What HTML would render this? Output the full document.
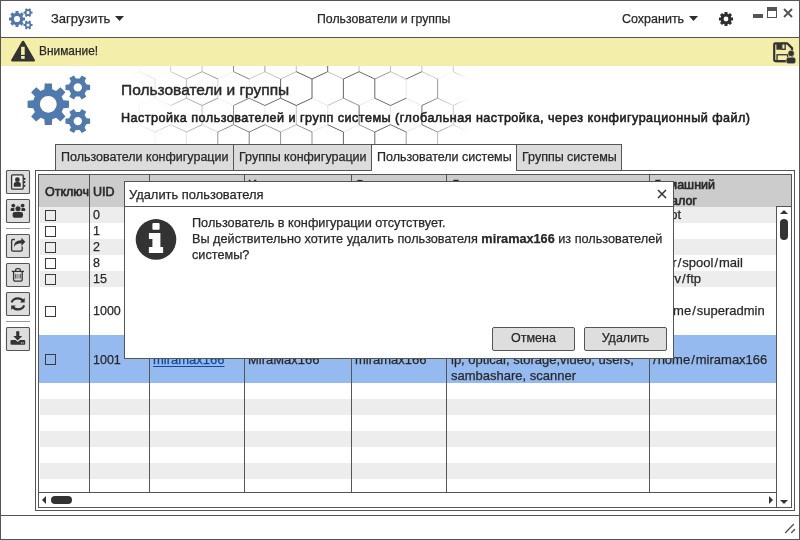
<!DOCTYPE html>
<html><head><meta charset="utf-8">
<style>
*{margin:0;padding:0;box-sizing:border-box}
html,body{width:800px;height:540px;overflow:hidden;background:#fff}
body{font-family:"Liberation Sans",sans-serif;color:#282828;font-size:12.5px}
#w{position:relative;width:800px;height:540px;overflow:hidden;background:#fff;will-change:transform;-webkit-text-stroke-width:0.25px}
.a{position:absolute}
.t{position:absolute;white-space:nowrap;line-height:16px}
.l{font-size:13px}
.s{font-style:normal;margin:0 1px}
.hd{-webkit-text-stroke-width:0.6px}
.hl{position:absolute;background:#555;height:1px}
.vl{position:absolute;background:#555;width:1px}
.btn{position:absolute;width:24px;height:24px;border:1px solid #555;border-radius:3px;background:#dedede}
.tab{position:absolute;top:144px;height:27px;border:1px solid #555;background:#dcdcdc;padding-left:5px;line-height:24px;white-space:nowrap}
.cb{position:absolute;width:11px;height:11px;border:1px solid #3a3a3a;left:45px}
</style></head><body><div id="w">
<div class="a" style="left:0;top:0;width:800px;height:540px;border:1px solid #555"></div>

<!-- top bar -->
<svg class="a" style="left:0;top:0" width="40" height="37" viewBox="0 0 40 37">
 <g fill="#4f77ae" fill-rule="evenodd">
  <path transform="translate(17,19)" d="M5.99,-1.59 L7.97,-1.45 L7.97,1.45 L5.99,1.59 L5.36,3.11 L6.66,4.61 L4.61,6.66 L3.11,5.36 L1.59,5.99 L1.45,7.97 L-1.45,7.97 L-1.59,5.99 L-3.11,5.36 L-4.61,6.66 L-6.66,4.61 L-5.36,3.11 L-5.99,1.59 L-7.97,1.45 L-7.97,-1.45 L-5.99,-1.59 L-5.36,-3.11 L-6.66,-4.61 L-4.61,-6.66 L-3.11,-5.36 L-1.59,-5.99 L-1.45,-7.97 L1.45,-7.97 L1.59,-5.99 L3.11,-5.36 L4.61,-6.66 L6.66,-4.61 L5.36,-3.11Z M3.10,0.00 A3.1,3.1 0 1 0 -3.10,0.00 A3.1,3.1 0 1 0 3.10,0.00Z"/>
  <path transform="translate(28,12.6) scale(0.37)" d="M8.76,-2.81 L12.32,-2.63 L12.32,2.63 L8.76,2.81 L6.81,6.18 L8.44,9.36 L3.89,11.99 L1.95,8.99 L-1.95,8.99 L-3.89,11.99 L-8.44,9.36 L-6.81,6.18 L-8.76,2.81 L-12.32,2.63 L-12.32,-2.63 L-8.76,-2.81 L-6.81,-6.18 L-8.44,-9.36 L-3.89,-11.99 L-1.95,-8.99 L1.95,-8.99 L3.89,-11.99 L8.44,-9.36 L6.81,-6.18Z M4.20,0.00 A4.2,4.2 0 1 0 -4.20,0.00 A4.2,4.2 0 1 0 4.20,0.00Z"/>
  <path transform="translate(28,25) scale(0.37)" d="M8.76,-2.81 L12.32,-2.63 L12.32,2.63 L8.76,2.81 L6.81,6.18 L8.44,9.36 L3.89,11.99 L1.95,8.99 L-1.95,8.99 L-3.89,11.99 L-8.44,9.36 L-6.81,6.18 L-8.76,2.81 L-12.32,2.63 L-12.32,-2.63 L-8.76,-2.81 L-6.81,-6.18 L-8.44,-9.36 L-3.89,-11.99 L-1.95,-8.99 L1.95,-8.99 L3.89,-11.99 L8.44,-9.36 L6.81,-6.18Z M4.20,0.00 A4.2,4.2 0 1 0 -4.20,0.00 A4.2,4.2 0 1 0 4.20,0.00Z"/>
 </g>
</svg>
<div class="t" style="left:51px;top:11px;font-size:13px">Загрузить</div>
<svg class="a" style="left:115px;top:16px" width="9" height="5"><path d="M0,0H9L4.5,5Z" fill="#2e2e2e"/></svg>
<div class="t" style="left:317px;top:11px;font-size:12.3px">Пользователи и группы</div>
<div class="t" style="left:622px;top:11px">Сохранить</div>
<svg class="a" style="left:689px;top:16px" width="9" height="5"><path d="M0,0H9L4.5,5Z" fill="#2e2e2e"/></svg>
<svg class="a" style="left:718px;top:11px" width="16" height="16" viewBox="-8 -8 16 16"><path fill="#2e2e2e" fill-rule="evenodd" d="M5.27,-1.57 L7.06,-1.43 L7.06,1.43 L5.27,1.57 L4.84,2.61 L6.00,3.98 L3.98,6.00 L2.61,4.84 L1.57,5.27 L1.43,7.06 L-1.43,7.06 L-1.57,5.27 L-2.61,4.84 L-3.98,6.00 L-6.00,3.98 L-4.84,2.61 L-5.27,1.57 L-7.06,1.43 L-7.06,-1.43 L-5.27,-1.57 L-4.84,-2.61 L-6.00,-3.98 L-3.98,-6.00 L-2.61,-4.84 L-1.57,-5.27 L-1.43,-7.06 L1.43,-7.06 L1.57,-5.27 L2.61,-4.84 L3.98,-6.00 L6.00,-3.98 L4.84,-2.61Z M2.40,0.00 A2.4,2.4 0 1 0 -2.40,0.00 A2.4,2.4 0 1 0 2.40,0.00Z"/></svg>
<div class="a" style="left:753px;top:14px;width:10px;height:4px;background:#555"></div>
<div class="a" style="left:767px;top:7px;width:10px;height:11px;border:1px solid #555;border-top:4px solid #555"></div>
<svg class="a" style="left:783px;top:8px" width="10" height="10"><path d="M1,1L9,9M9,1L1,9" stroke="#555" stroke-width="1.9"/></svg>
<div class="hl" style="left:0;top:37px;width:800px"></div>

<!-- yellow bar -->
<div class="a" style="left:1px;top:38px;width:798px;height:28px;background:#f3efab"></div>
<svg class="a" style="left:9px;top:39px" width="28" height="25" viewBox="0 0 28 25">
 <path d="M14.05,2.95 L24.75,21.35 H3.35Z" fill="#333" stroke="#333" stroke-width="2.5" stroke-linejoin="round"/>
 <rect x="12.1" y="7.8" width="3.6" height="8.1" fill="#f3efab"/>
 <rect x="12.1" y="17" width="3.6" height="2.8" fill="#f3efab"/>
</svg>
<div class="t" style="left:39px;top:43px;font-size:11.9px">Внимание!</div>
<svg class="a" style="left:770px;top:40px" width="29" height="26" viewBox="0 0 29 26">
 <path d="M5.2,3.3 H17.2 L22,8.1 V21.1 H5.2 Q4.2,21.1 4.2,20.1 V4.3 Q4.2,3.3 5.2,3.3Z" fill="none" stroke="#333" stroke-width="2.2" stroke-linejoin="round"/>
 <rect x="6.4" y="3" width="4.7" height="6.7" fill="#333"/>
 <rect x="11.75" y="3.4" width="3.4" height="5.9" fill="none" stroke="#333" stroke-width="1.3"/>
 <rect x="7.05" y="14.75" width="10.6" height="6.8" fill="none" stroke="#333" stroke-width="1.3"/>
 <circle cx="21.1" cy="13.4" r="3.2" fill="#333" stroke="#f3efab" stroke-width="0.6"/>
 <rect x="16.1" y="17.2" width="9.7" height="6.6" rx="2.4" fill="#333" stroke="#f3efab" stroke-width="0.6"/>
</svg>

<!-- hex pattern -->
<svg class="a" style="left:100px;top:66px" width="380" height="104" viewBox="0 0 380 104">
 <defs>
  <linearGradient id="fg" x1="0" x2="1" y1="0" y2="0">
   <stop offset="0" stop-color="#fff" stop-opacity="0"/>
   <stop offset="0.08" stop-color="#fff" stop-opacity="0"/>
   <stop offset="0.3" stop-color="#fff" stop-opacity="0.6"/>
   <stop offset="0.5" stop-color="#fff" stop-opacity="0.95"/>
   <stop offset="0.85" stop-color="#fff" stop-opacity="0.85"/>
   <stop offset="0.93" stop-color="#fff" stop-opacity="0.3"/>
   <stop offset="0.97" stop-color="#fff" stop-opacity="0"/>
   <stop offset="1" stop-color="#fff" stop-opacity="0"/>
  </linearGradient>
  <mask id="fm"><rect width="380" height="104" fill="url(#fg)"/></mask>
 </defs>
 <g mask="url(#fm)" fill="none" stroke="#444" stroke-width="0.9"><path stroke-opacity="0.7" d="M-306.1,-100.3L-321.8,-93.0 M-259.0,-93.0L-259.0,-73.8 M55.0,-93.0L55.0,-73.8 M117.8,-93.0L117.8,-73.8 M212.0,-93.0L212.0,-73.8 M384.7,-100.3L369.0,-93.0 M416.1,-100.3L431.8,-93.0 M400.4,-93.0L400.4,-73.8 M-227.6,-73.8L-243.3,-66.5 M-196.2,-73.8L-211.9,-66.5 M-164.8,-73.8L-180.5,-66.5 M-102.0,-73.8L-86.3,-66.5 M-7.8,-73.8L7.9,-66.5 M-23.5,-66.5L-23.5,-47.3 M23.6,-73.8L39.3,-66.5 M70.7,-66.5L70.7,-47.3 M180.6,-73.8L196.3,-66.5 M243.4,-73.8L227.7,-66.5 M274.8,-73.8L290.5,-66.5 M306.2,-73.8L321.9,-66.5 M353.3,-66.5L353.3,-47.3 M-290.4,-40.0L-290.4,-20.8 M-211.9,-47.3L-227.6,-40.0 M-180.5,-47.3L-196.2,-40.0 M-23.5,-47.3L-39.2,-40.0 M-23.5,-47.3L-7.8,-40.0 M39.3,-47.3L23.6,-40.0 M70.7,-47.3L55.0,-40.0 M353.3,-47.3L337.6,-40.0 M-290.4,-20.8L-306.1,-13.5 M-196.2,-20.8L-211.9,-13.5 M-196.2,-20.8L-180.5,-13.5 M-164.8,-20.8L-180.5,-13.5 M-117.7,-13.5L-117.7,5.7 M-39.2,-20.8L-23.5,-13.5 M-7.8,-20.8L-23.5,-13.5 M39.3,-13.5L39.3,5.7 M102.1,-13.5L102.1,5.7 M180.6,-20.8L164.9,-13.5 M164.9,-13.5L164.9,5.7 M212.0,-20.8L227.7,-13.5 M274.8,-20.8L259.1,-13.5 M400.4,-20.8L384.7,-13.5 M431.8,-20.8L447.5,-13.5 M-306.1,5.7L-321.8,13.0 M-274.7,5.7L-259.0,13.0 M-243.3,5.7L-227.6,13.0 M-259.0,13.0L-259.0,32.2 M-149.1,5.7L-164.8,13.0 M-102.0,13.0L-102.0,32.2 M23.6,13.0L23.6,32.2 M290.5,5.7L274.8,13.0 M-306.1,39.5L-306.1,58.7 M-259.0,32.2L-243.3,39.5 M-243.3,39.5L-243.3,58.7 M-196.2,32.2L-211.9,39.5 M-133.4,32.2L-149.1,39.5 M102.1,39.5L102.1,58.7 M243.4,32.2L259.1,39.5 M337.6,32.2L353.3,39.5 M384.7,39.5L384.7,58.7 M-290.4,66.0L-290.4,85.2 M-196.2,66.0L-196.2,85.2 M-86.3,58.7L-70.6,66.0 M-23.5,58.7L-7.8,66.0 M7.9,58.7L-7.8,66.0 M164.9,58.7L180.6,66.0 M196.3,58.7L212.0,66.0 M180.6,66.0L180.6,85.2 M212.0,66.0L212.0,85.2 M259.1,58.7L274.8,66.0 M306.2,66.0L306.2,85.2 M337.6,66.0L337.6,85.2 M-290.4,85.2L-306.1,92.5 M-290.4,85.2L-274.7,92.5 M-259.0,85.2L-243.3,92.5 M-243.3,92.5L-243.3,111.7 M-133.4,85.2L-117.7,92.5 M-102.0,85.2L-117.7,92.5 M-39.2,85.2L-54.9,92.5 M-7.8,85.2L7.9,92.5 M55.0,85.2L39.3,92.5 M86.4,85.2L102.1,92.5 M117.8,85.2L133.5,92.5 M212.0,85.2L227.7,92.5 M227.7,92.5L227.7,111.7 M274.8,85.2L290.5,92.5 M306.2,85.2L321.9,92.5 M369.0,85.2L353.3,92.5 M369.0,85.2L384.7,92.5 M400.4,85.2L384.7,92.5 M-149.1,111.7L-164.8,119.0 M-117.7,111.7L-102.0,119.0 M-70.6,119.0L-70.6,138.2 M39.3,111.7L23.6,119.0 M133.5,111.7L117.8,119.0 M164.9,111.7L180.6,119.0 M227.7,111.7L212.0,119.0 M259.1,111.7L243.4,119.0 M259.1,111.7L274.8,119.0 M243.4,119.0L243.4,138.2 M290.5,111.7L306.2,119.0 M321.9,111.7L337.6,119.0 M353.3,111.7L337.6,119.0 M384.7,111.7L369.0,119.0 M416.1,111.7L431.8,119.0 M-227.6,138.2L-243.3,145.5 M-180.5,145.5L-180.5,164.7 M-133.4,138.2L-149.1,145.5 M-54.9,145.5L-54.9,164.7 M23.6,138.2L7.9,145.5 M337.6,138.2L321.9,145.5 M-306.1,164.7L-290.4,172.0 M-149.1,164.7L-164.8,172.0 M-164.8,172.0L-164.8,191.2 M7.9,164.7L-7.8,172.0 M102.1,164.7L86.4,172.0 M102.1,164.7L117.8,172.0 M117.8,172.0L117.8,191.2 M227.7,164.7L243.4,172.0 M274.8,172.0L274.8,191.2 M306.2,172.0L306.2,191.2 M416.1,164.7L400.4,172.0 M-290.4,191.2L-274.7,198.5 M-227.6,191.2L-243.3,198.5 M-133.4,191.2L-117.7,198.5 M-149.1,198.5L-149.1,217.7 M-70.6,191.2L-54.9,198.5 M-39.2,191.2L-23.5,198.5 M86.4,191.2L102.1,198.5 M102.1,198.5L102.1,217.7 M149.2,191.2L164.9,198.5 M180.6,191.2L164.9,198.5 M164.9,198.5L164.9,217.7 M212.0,191.2L196.3,198.5 M274.8,191.2L290.5,198.5 M259.1,198.5L259.1,217.7 M306.2,191.2L290.5,198.5 M369.0,191.2L353.3,198.5 M353.3,198.5L353.3,217.7 M400.4,191.2L416.1,198.5 M416.1,198.5L416.1,217.7"/><path stroke-opacity="0.4" d="M-306.1,-100.3L-290.4,-93.0 M-180.5,-100.3L-196.2,-93.0 M-117.7,-100.3L-133.4,-93.0 M-54.9,-100.3L-39.2,-93.0 M39.3,-100.3L55.0,-93.0 M70.7,-100.3L86.4,-93.0 M102.1,-100.3L117.8,-93.0 M149.2,-93.0L149.2,-73.8 M227.7,-100.3L243.4,-93.0 M321.9,-100.3L337.6,-93.0 M-290.4,-73.8L-306.1,-66.5 M-290.4,-73.8L-274.7,-66.5 M-259.0,-73.8L-274.7,-66.5 M-102.0,-73.8L-117.7,-66.5 M-117.7,-66.5L-117.7,-47.3 M290.5,-66.5L290.5,-47.3 M369.0,-73.8L384.7,-66.5 M400.4,-73.8L384.7,-66.5 M384.7,-66.5L384.7,-47.3 M-306.1,-47.3L-290.4,-40.0 M-243.3,-47.3L-259.0,-40.0 M-149.1,-47.3L-164.8,-40.0 M-149.1,-47.3L-133.4,-40.0 M-117.7,-47.3L-133.4,-40.0 M-117.7,-47.3L-102.0,-40.0 M-133.4,-40.0L-133.4,-20.8 M-86.3,-47.3L-70.6,-40.0 M-70.6,-40.0L-70.6,-20.8 M7.9,-47.3L-7.8,-40.0 M70.7,-47.3L86.4,-40.0 M290.5,-47.3L274.8,-40.0 M274.8,-40.0L274.8,-20.8 M321.9,-47.3L337.6,-40.0 M416.1,-47.3L400.4,-40.0 M-259.0,-20.8L-243.3,-13.5 M-227.6,-20.8L-211.9,-13.5 M-70.6,-20.8L-54.9,-13.5 M23.6,-20.8L7.9,-13.5 M55.0,-20.8L39.3,-13.5 M86.4,-20.8L70.7,-13.5 M212.0,-20.8L196.3,-13.5 M196.3,-13.5L196.3,5.7 M259.1,-13.5L259.1,5.7 M306.2,-20.8L321.9,-13.5 M290.5,-13.5L290.5,5.7 M321.9,-13.5L321.9,5.7 M369.0,-20.8L353.3,-13.5 M-306.1,5.7L-290.4,13.0 M-211.9,5.7L-196.2,13.0 M-180.5,5.7L-196.2,13.0 M-196.2,13.0L-196.2,32.2 M-149.1,5.7L-133.4,13.0 M7.9,5.7L-7.8,13.0 M-7.8,13.0L-7.8,32.2 M117.8,13.0L117.8,32.2 M164.9,5.7L149.2,13.0 M164.9,5.7L180.6,13.0 M196.3,5.7L180.6,13.0 M227.7,5.7L243.4,13.0 M290.5,5.7L306.2,13.0 M321.9,5.7L337.6,13.0 M416.1,5.7L400.4,13.0 M400.4,13.0L400.4,32.2 M-290.4,32.2L-306.1,39.5 M-259.0,32.2L-274.7,39.5 M-227.6,32.2L-243.3,39.5 M-164.8,32.2L-180.5,39.5 M-70.6,32.2L-54.9,39.5 M-39.2,32.2L-54.9,39.5 M-23.5,39.5L-23.5,58.7 M7.9,39.5L7.9,58.7 M55.0,32.2L39.3,39.5 M55.0,32.2L70.7,39.5 M196.3,39.5L196.3,58.7 M243.4,32.2L227.7,39.5 M400.4,32.2L384.7,39.5 M-321.8,66.0L-321.8,85.2 M-243.3,58.7L-227.6,66.0 M-211.9,58.7L-227.6,66.0 M-164.8,66.0L-164.8,85.2 M-133.4,66.0L-133.4,85.2 M-54.9,58.7L-70.6,66.0 M-39.2,66.0L-39.2,85.2 M7.9,58.7L23.6,66.0 M39.3,58.7L23.6,66.0 M55.0,66.0L55.0,85.2 M102.1,58.7L117.8,66.0 M86.4,66.0L86.4,85.2 M196.3,58.7L180.6,66.0 M416.1,58.7L400.4,66.0 M-259.0,85.2L-274.7,92.5 M-274.7,92.5L-274.7,111.7 M-196.2,85.2L-180.5,92.5 M-70.6,85.2L-86.3,92.5 M23.6,85.2L39.3,92.5 M149.2,85.2L133.5,92.5 M180.6,85.2L196.3,92.5 M212.0,85.2L196.3,92.5 M243.4,85.2L227.7,92.5 M243.4,85.2L259.1,92.5 M306.2,85.2L290.5,92.5 M321.9,92.5L321.9,111.7 M-306.1,111.7L-290.4,119.0 M-274.7,111.7L-259.0,119.0 M-164.8,119.0L-164.8,138.2 M-117.7,111.7L-133.4,119.0 M-133.4,119.0L-133.4,138.2 M-54.9,111.7L-70.6,119.0 M-23.5,111.7L-7.8,119.0 M23.6,119.0L23.6,138.2 M117.8,119.0L117.8,138.2 M196.3,111.7L212.0,119.0 M180.6,119.0L180.6,138.2 M274.8,119.0L274.8,138.2 M306.2,119.0L306.2,138.2 M353.3,111.7L369.0,119.0 M-290.4,138.2L-274.7,145.5 M-306.1,145.5L-306.1,164.7 M-243.3,145.5L-243.3,164.7 M-149.1,145.5L-149.1,164.7 M-70.6,138.2L-86.3,145.5 M-23.5,145.5L-23.5,164.7 M55.0,138.2L70.7,145.5 M149.2,138.2L164.9,145.5 M274.8,138.2L259.1,145.5 M306.2,138.2L321.9,145.5 M416.1,145.5L416.1,164.7 M-117.7,164.7L-133.4,172.0 M-133.4,172.0L-133.4,191.2 M-86.3,164.7L-102.0,172.0 M23.6,172.0L23.6,191.2 M55.0,172.0L55.0,191.2 M149.2,172.0L149.2,191.2 M243.4,172.0L243.4,191.2 M369.0,172.0L369.0,191.2 M-243.3,198.5L-243.3,217.7 M-196.2,191.2L-211.9,198.5 M-164.8,191.2L-149.1,198.5 M-102.0,191.2L-117.7,198.5 M-54.9,198.5L-54.9,217.7 M23.6,191.2L39.3,198.5 M117.8,191.2L102.1,198.5 M243.4,191.2L227.7,198.5"/><path stroke-opacity="1.0" d="M-321.8,-93.0L-321.8,-73.8 M-274.7,-100.3L-290.4,-93.0 M-243.3,-100.3L-259.0,-93.0 M-211.9,-100.3L-227.6,-93.0 M-227.6,-93.0L-227.6,-73.8 M-149.1,-100.3L-164.8,-93.0 M-149.1,-100.3L-133.4,-93.0 M-133.4,-93.0L-133.4,-73.8 M-86.3,-100.3L-102.0,-93.0 M-102.0,-93.0L-102.0,-73.8 M-70.6,-93.0L-70.6,-73.8 M-23.5,-100.3L-39.2,-93.0 M-23.5,-100.3L-7.8,-93.0 M7.9,-100.3L-7.8,-93.0 M7.9,-100.3L23.6,-93.0 M-7.8,-93.0L-7.8,-73.8 M70.7,-100.3L55.0,-93.0 M102.1,-100.3L86.4,-93.0 M86.4,-93.0L86.4,-73.8 M133.5,-100.3L149.2,-93.0 M164.9,-100.3L149.2,-93.0 M164.9,-100.3L180.6,-93.0 M196.3,-100.3L212.0,-93.0 M180.6,-93.0L180.6,-73.8 M227.7,-100.3L212.0,-93.0 M259.1,-100.3L274.8,-93.0 M243.4,-93.0L243.4,-73.8 M290.5,-100.3L306.2,-93.0 M321.9,-100.3L306.2,-93.0 M306.2,-93.0L306.2,-73.8 M353.3,-100.3L337.6,-93.0 M353.3,-100.3L369.0,-93.0 M337.6,-93.0L337.6,-73.8 M384.7,-100.3L400.4,-93.0 M369.0,-93.0L369.0,-73.8 M416.1,-100.3L400.4,-93.0 M-306.1,-66.5L-306.1,-47.3 M-274.7,-66.5L-274.7,-47.3 M-227.6,-73.8L-211.9,-66.5 M-243.3,-66.5L-243.3,-47.3 M-196.2,-73.8L-180.5,-66.5 M-211.9,-66.5L-211.9,-47.3 M-164.8,-73.8L-149.1,-66.5 M-133.4,-73.8L-117.7,-66.5 M-149.1,-66.5L-149.1,-47.3 M-70.6,-73.8L-86.3,-66.5 M-70.6,-73.8L-54.9,-66.5 M-39.2,-73.8L-54.9,-66.5 M-54.9,-66.5L-54.9,-47.3 M-7.8,-73.8L-23.5,-66.5 M23.6,-73.8L7.9,-66.5 M7.9,-66.5L7.9,-47.3 M55.0,-73.8L39.3,-66.5 M55.0,-73.8L70.7,-66.5 M39.3,-66.5L39.3,-47.3 M117.8,-73.8L102.1,-66.5 M117.8,-73.8L133.5,-66.5 M102.1,-66.5L102.1,-47.3 M133.5,-66.5L133.5,-47.3 M180.6,-73.8L164.9,-66.5 M164.9,-66.5L164.9,-47.3 M212.0,-73.8L196.3,-66.5 M212.0,-73.8L227.7,-66.5 M196.3,-66.5L196.3,-47.3 M243.4,-73.8L259.1,-66.5 M227.7,-66.5L227.7,-47.3 M274.8,-73.8L259.1,-66.5 M306.2,-73.8L290.5,-66.5 M337.6,-73.8L321.9,-66.5 M321.9,-66.5L321.9,-47.3 M400.4,-73.8L416.1,-66.5 M431.8,-73.8L416.1,-66.5 M431.8,-73.8L447.5,-66.5 M416.1,-66.5L416.1,-47.3 M-321.8,-40.0L-321.8,-20.8 M-274.7,-47.3L-290.4,-40.0 M-274.7,-47.3L-259.0,-40.0 M-243.3,-47.3L-227.6,-40.0 M-259.0,-40.0L-259.0,-20.8 M-211.9,-47.3L-196.2,-40.0 M-227.6,-40.0L-227.6,-20.8 M-180.5,-47.3L-164.8,-40.0 M-196.2,-40.0L-196.2,-20.8 M-86.3,-47.3L-102.0,-40.0 M-54.9,-47.3L-70.6,-40.0 M-54.9,-47.3L-39.2,-40.0 M7.9,-47.3L23.6,-40.0 M-7.8,-40.0L-7.8,-20.8 M39.3,-47.3L55.0,-40.0 M23.6,-40.0L23.6,-20.8 M55.0,-40.0L55.0,-20.8 M102.1,-47.3L86.4,-40.0 M102.1,-47.3L117.8,-40.0 M86.4,-40.0L86.4,-20.8 M133.5,-47.3L117.8,-40.0 M133.5,-47.3L149.2,-40.0 M164.9,-47.3L149.2,-40.0 M164.9,-47.3L180.6,-40.0 M149.2,-40.0L149.2,-20.8 M196.3,-47.3L180.6,-40.0 M196.3,-47.3L212.0,-40.0 M180.6,-40.0L180.6,-20.8 M227.7,-47.3L212.0,-40.0 M212.0,-40.0L212.0,-20.8 M259.1,-47.3L243.4,-40.0 M259.1,-47.3L274.8,-40.0 M321.9,-47.3L306.2,-40.0 M353.3,-47.3L369.0,-40.0 M369.0,-40.0L369.0,-20.8 M416.1,-47.3L431.8,-40.0 M-290.4,-20.8L-274.7,-13.5 M-274.7,-13.5L-274.7,5.7 M-227.6,-20.8L-243.3,-13.5 M-243.3,-13.5L-243.3,5.7 M-211.9,-13.5L-211.9,5.7 M-164.8,-20.8L-149.1,-13.5 M-133.4,-20.8L-117.7,-13.5 M-149.1,-13.5L-149.1,5.7 M-102.0,-20.8L-117.7,-13.5 M-102.0,-20.8L-86.3,-13.5 M-39.2,-20.8L-54.9,-13.5 M-54.9,-13.5L-54.9,5.7 M-7.8,-20.8L7.9,-13.5 M-23.5,-13.5L-23.5,5.7 M23.6,-20.8L39.3,-13.5 M55.0,-20.8L70.7,-13.5 M86.4,-20.8L102.1,-13.5 M70.7,-13.5L70.7,5.7 M117.8,-20.8L133.5,-13.5 M149.2,-20.8L133.5,-13.5 M133.5,-13.5L133.5,5.7 M180.6,-20.8L196.3,-13.5 M243.4,-20.8L227.7,-13.5 M243.4,-20.8L259.1,-13.5 M227.7,-13.5L227.7,5.7 M274.8,-20.8L290.5,-13.5 M306.2,-20.8L290.5,-13.5 M337.6,-20.8L321.9,-13.5 M337.6,-20.8L353.3,-13.5 M369.0,-20.8L384.7,-13.5 M353.3,-13.5L353.3,5.7 M400.4,-20.8L416.1,-13.5 M416.1,-13.5L416.1,5.7 M-321.8,13.0L-321.8,32.2 M-274.7,5.7L-290.4,13.0 M-290.4,13.0L-290.4,32.2 M-243.3,5.7L-259.0,13.0 M-180.5,5.7L-164.8,13.0 M-164.8,13.0L-164.8,32.2 M-117.7,5.7L-133.4,13.0 M-117.7,5.7L-102.0,13.0 M-86.3,5.7L-102.0,13.0 M-86.3,5.7L-70.6,13.0 M-54.9,5.7L-70.6,13.0 M-70.6,13.0L-70.6,32.2 M-23.5,5.7L-7.8,13.0 M-39.2,13.0L-39.2,32.2 M7.9,5.7L23.6,13.0 M39.3,5.7L23.6,13.0 M39.3,5.7L55.0,13.0 M70.7,5.7L86.4,13.0 M55.0,13.0L55.0,32.2 M102.1,5.7L86.4,13.0 M102.1,5.7L117.8,13.0 M86.4,13.0L86.4,32.2 M133.5,5.7L149.2,13.0 M196.3,5.7L212.0,13.0 M180.6,13.0L180.6,32.2 M227.7,5.7L212.0,13.0 M212.0,13.0L212.0,32.2 M259.1,5.7L243.4,13.0 M259.1,5.7L274.8,13.0 M243.4,13.0L243.4,32.2 M274.8,13.0L274.8,32.2 M321.9,5.7L306.2,13.0 M353.3,5.7L369.0,13.0 M337.6,13.0L337.6,32.2 M384.7,5.7L400.4,13.0 M369.0,13.0L369.0,32.2 M416.1,5.7L431.8,13.0 M-274.7,39.5L-274.7,58.7 M-227.6,32.2L-211.9,39.5 M-196.2,32.2L-180.5,39.5 M-211.9,39.5L-211.9,58.7 M-180.5,39.5L-180.5,58.7 M-133.4,32.2L-117.7,39.5 M-149.1,39.5L-149.1,58.7 M-102.0,32.2L-117.7,39.5 M-102.0,32.2L-86.3,39.5 M-117.7,39.5L-117.7,58.7 M-70.6,32.2L-86.3,39.5 M-86.3,39.5L-86.3,58.7 M-39.2,32.2L-23.5,39.5 M-54.9,39.5L-54.9,58.7 M-7.8,32.2L7.9,39.5 M23.6,32.2L7.9,39.5 M39.3,39.5L39.3,58.7 M86.4,32.2L70.7,39.5 M86.4,32.2L102.1,39.5 M117.8,32.2L102.1,39.5 M149.2,32.2L133.5,39.5 M149.2,32.2L164.9,39.5 M133.5,39.5L133.5,58.7 M180.6,32.2L164.9,39.5 M180.6,32.2L196.3,39.5 M212.0,32.2L196.3,39.5 M274.8,32.2L290.5,39.5 M259.1,39.5L259.1,58.7 M306.2,32.2L290.5,39.5 M337.6,32.2L321.9,39.5 M321.9,39.5L321.9,58.7 M369.0,32.2L353.3,39.5 M369.0,32.2L384.7,39.5 M353.3,39.5L353.3,58.7 M400.4,32.2L416.1,39.5 M431.8,32.2L416.1,39.5 M431.8,32.2L447.5,39.5 M416.1,39.5L416.1,58.7 M-306.1,58.7L-321.8,66.0 M-306.1,58.7L-290.4,66.0 M-274.7,58.7L-290.4,66.0 M-274.7,58.7L-259.0,66.0 M-243.3,58.7L-259.0,66.0 M-259.0,66.0L-259.0,85.2 M-211.9,58.7L-196.2,66.0 M-180.5,58.7L-196.2,66.0 M-180.5,58.7L-164.8,66.0 M-149.1,58.7L-133.4,66.0 M-117.7,58.7L-133.4,66.0 M-86.3,58.7L-102.0,66.0 M-54.9,58.7L-39.2,66.0 M-70.6,66.0L-70.6,85.2 M-23.5,58.7L-39.2,66.0 M-7.8,66.0L-7.8,85.2 M39.3,58.7L55.0,66.0 M70.7,58.7L55.0,66.0 M70.7,58.7L86.4,66.0 M102.1,58.7L86.4,66.0 M133.5,58.7L117.8,66.0 M133.5,58.7L149.2,66.0 M117.8,66.0L117.8,85.2 M164.9,58.7L149.2,66.0 M149.2,66.0L149.2,85.2 M227.7,58.7L243.4,66.0 M243.4,66.0L243.4,85.2 M290.5,58.7L274.8,66.0 M290.5,58.7L306.2,66.0 M274.8,66.0L274.8,85.2 M321.9,58.7L337.6,66.0 M353.3,58.7L337.6,66.0 M353.3,58.7L369.0,66.0 M384.7,58.7L369.0,66.0 M-227.6,85.2L-243.3,92.5 M-227.6,85.2L-211.9,92.5 M-196.2,85.2L-211.9,92.5 M-211.9,92.5L-211.9,111.7 M-164.8,85.2L-180.5,92.5 M-164.8,85.2L-149.1,92.5 M-180.5,92.5L-180.5,111.7 M-133.4,85.2L-149.1,92.5 M-117.7,92.5L-117.7,111.7 M-70.6,85.2L-54.9,92.5 M-54.9,92.5L-54.9,111.7 M23.6,85.2L7.9,92.5 M39.3,92.5L39.3,111.7 M70.7,92.5L70.7,111.7 M117.8,85.2L102.1,92.5 M102.1,92.5L102.1,111.7 M133.5,92.5L133.5,111.7 M180.6,85.2L164.9,92.5 M274.8,85.2L259.1,92.5 M259.1,92.5L259.1,111.7 M290.5,92.5L290.5,111.7 M337.6,85.2L321.9,92.5 M337.6,85.2L353.3,92.5 M431.8,85.2L447.5,92.5 M416.1,92.5L416.1,111.7 M-306.1,111.7L-321.8,119.0 M-321.8,119.0L-321.8,138.2 M-274.7,111.7L-290.4,119.0 M-290.4,119.0L-290.4,138.2 M-243.3,111.7L-227.6,119.0 M-259.0,119.0L-259.0,138.2 M-211.9,111.7L-227.6,119.0 M-211.9,111.7L-196.2,119.0 M-227.6,119.0L-227.6,138.2 M-180.5,111.7L-196.2,119.0 M-180.5,111.7L-164.8,119.0 M-196.2,119.0L-196.2,138.2 M-149.1,111.7L-133.4,119.0 M-86.3,111.7L-102.0,119.0 M-86.3,111.7L-70.6,119.0 M-102.0,119.0L-102.0,138.2 M-54.9,111.7L-39.2,119.0 M7.9,111.7L23.6,119.0 M-7.8,119.0L-7.8,138.2 M39.3,111.7L55.0,119.0 M55.0,119.0L55.0,138.2 M102.1,111.7L86.4,119.0 M102.1,111.7L117.8,119.0 M86.4,119.0L86.4,138.2 M133.5,111.7L149.2,119.0 M164.9,111.7L149.2,119.0 M196.3,111.7L180.6,119.0 M227.7,111.7L243.4,119.0 M290.5,111.7L274.8,119.0 M384.7,111.7L400.4,119.0 M416.1,111.7L400.4,119.0 M400.4,119.0L400.4,138.2 M-290.4,138.2L-306.1,145.5 M-259.0,138.2L-274.7,145.5 M-196.2,138.2L-211.9,145.5 M-196.2,138.2L-180.5,145.5 M-164.8,138.2L-180.5,145.5 M-133.4,138.2L-117.7,145.5 M-102.0,138.2L-86.3,145.5 M-117.7,145.5L-117.7,164.7 M-70.6,138.2L-54.9,145.5 M-86.3,145.5L-86.3,164.7 M-39.2,138.2L-54.9,145.5 M-39.2,138.2L-23.5,145.5 M-7.8,138.2L-23.5,145.5 M-7.8,138.2L7.9,145.5 M23.6,138.2L39.3,145.5 M7.9,145.5L7.9,164.7 M55.0,138.2L39.3,145.5 M86.4,138.2L70.7,145.5 M86.4,138.2L102.1,145.5 M70.7,145.5L70.7,164.7 M117.8,138.2L102.1,145.5 M117.8,138.2L133.5,145.5 M102.1,145.5L102.1,164.7 M149.2,138.2L133.5,145.5 M133.5,145.5L133.5,164.7 M180.6,138.2L164.9,145.5 M180.6,138.2L196.3,145.5 M212.0,138.2L196.3,145.5 M212.0,138.2L227.7,145.5 M196.3,145.5L196.3,164.7 M243.4,138.2L227.7,145.5 M243.4,138.2L259.1,145.5 M227.7,145.5L227.7,164.7 M290.5,145.5L290.5,164.7 M321.9,145.5L321.9,164.7 M369.0,138.2L353.3,145.5 M369.0,138.2L384.7,145.5 M400.4,138.2L384.7,145.5 M384.7,145.5L384.7,164.7 M431.8,138.2L416.1,145.5 M431.8,138.2L447.5,145.5 M-306.1,164.7L-321.8,172.0 M-274.7,164.7L-290.4,172.0 M-290.4,172.0L-290.4,191.2 M-243.3,164.7L-259.0,172.0 M-243.3,164.7L-227.6,172.0 M-211.9,164.7L-227.6,172.0 M-211.9,164.7L-196.2,172.0 M-180.5,164.7L-196.2,172.0 M-180.5,164.7L-164.8,172.0 M-196.2,172.0L-196.2,191.2 M-117.7,164.7L-102.0,172.0 M-86.3,164.7L-70.6,172.0 M-102.0,172.0L-102.0,191.2 M-54.9,164.7L-70.6,172.0 M-54.9,164.7L-39.2,172.0 M-70.6,172.0L-70.6,191.2 M-23.5,164.7L-7.8,172.0 M-39.2,172.0L-39.2,191.2 M-7.8,172.0L-7.8,191.2 M39.3,164.7L23.6,172.0 M39.3,164.7L55.0,172.0 M70.7,164.7L86.4,172.0 M86.4,172.0L86.4,191.2 M133.5,164.7L117.8,172.0 M133.5,164.7L149.2,172.0 M164.9,164.7L149.2,172.0 M164.9,164.7L180.6,172.0 M196.3,164.7L212.0,172.0 M227.7,164.7L212.0,172.0 M212.0,172.0L212.0,191.2 M259.1,164.7L274.8,172.0 M290.5,164.7L274.8,172.0 M290.5,164.7L306.2,172.0 M321.9,164.7L306.2,172.0 M321.9,164.7L337.6,172.0 M353.3,164.7L337.6,172.0 M353.3,164.7L369.0,172.0 M337.6,172.0L337.6,191.2 M384.7,164.7L400.4,172.0 M400.4,172.0L400.4,191.2 M-306.1,198.5L-306.1,217.7 M-259.0,191.2L-243.3,198.5 M-274.7,198.5L-274.7,217.7 M-227.6,191.2L-211.9,198.5 M-211.9,198.5L-211.9,217.7 M-180.5,198.5L-180.5,217.7 M-133.4,191.2L-149.1,198.5 M-102.0,191.2L-86.3,198.5 M-117.7,198.5L-117.7,217.7 M-70.6,191.2L-86.3,198.5 M-39.2,191.2L-54.9,198.5 M-7.8,191.2L-23.5,198.5 M-7.8,191.2L7.9,198.5 M-23.5,198.5L-23.5,217.7 M55.0,191.2L39.3,198.5 M55.0,191.2L70.7,198.5 M39.3,198.5L39.3,217.7 M86.4,191.2L70.7,198.5 M70.7,198.5L70.7,217.7 M117.8,191.2L133.5,198.5 M149.2,191.2L133.5,198.5 M212.0,191.2L227.7,198.5 M243.4,191.2L259.1,198.5 M274.8,191.2L259.1,198.5 M290.5,198.5L290.5,217.7 M337.6,191.2L321.9,198.5 M337.6,191.2L353.3,198.5 M369.0,191.2L384.7,198.5 M431.8,191.2L447.5,198.5"/><path stroke-opacity="0.15" d="M-274.7,-100.3L-259.0,-93.0 M-290.4,-93.0L-290.4,-73.8 M-243.3,-100.3L-227.6,-93.0 M-211.9,-100.3L-196.2,-93.0 M-180.5,-100.3L-164.8,-93.0 M-196.2,-93.0L-196.2,-73.8 M-164.8,-93.0L-164.8,-73.8 M-117.7,-100.3L-102.0,-93.0 M-86.3,-100.3L-70.6,-93.0 M-54.9,-100.3L-70.6,-93.0 M-39.2,-93.0L-39.2,-73.8 M39.3,-100.3L23.6,-93.0 M23.6,-93.0L23.6,-73.8 M133.5,-100.3L117.8,-93.0 M196.3,-100.3L180.6,-93.0 M259.1,-100.3L243.4,-93.0 M290.5,-100.3L274.8,-93.0 M274.8,-93.0L274.8,-73.8 M-259.0,-73.8L-243.3,-66.5 M-180.5,-66.5L-180.5,-47.3 M-133.4,-73.8L-149.1,-66.5 M-86.3,-66.5L-86.3,-47.3 M-39.2,-73.8L-23.5,-66.5 M86.4,-73.8L70.7,-66.5 M86.4,-73.8L102.1,-66.5 M149.2,-73.8L133.5,-66.5 M149.2,-73.8L164.9,-66.5 M259.1,-66.5L259.1,-47.3 M337.6,-73.8L353.3,-66.5 M369.0,-73.8L353.3,-66.5 M-306.1,-47.3L-321.8,-40.0 M-164.8,-40.0L-164.8,-20.8 M-102.0,-40.0L-102.0,-20.8 M-39.2,-40.0L-39.2,-20.8 M117.8,-40.0L117.8,-20.8 M227.7,-47.3L243.4,-40.0 M243.4,-40.0L243.4,-20.8 M290.5,-47.3L306.2,-40.0 M306.2,-40.0L306.2,-20.8 M337.6,-40.0L337.6,-20.8 M384.7,-47.3L369.0,-40.0 M384.7,-47.3L400.4,-40.0 M400.4,-40.0L400.4,-20.8 M-306.1,-13.5L-306.1,5.7 M-259.0,-20.8L-274.7,-13.5 M-180.5,-13.5L-180.5,5.7 M-133.4,-20.8L-149.1,-13.5 M-70.6,-20.8L-86.3,-13.5 M-86.3,-13.5L-86.3,5.7 M7.9,-13.5L7.9,5.7 M117.8,-20.8L102.1,-13.5 M149.2,-20.8L164.9,-13.5 M384.7,-13.5L384.7,5.7 M431.8,-20.8L416.1,-13.5 M-211.9,5.7L-227.6,13.0 M-227.6,13.0L-227.6,32.2 M-133.4,13.0L-133.4,32.2 M-54.9,5.7L-39.2,13.0 M-23.5,5.7L-39.2,13.0 M70.7,5.7L55.0,13.0 M133.5,5.7L117.8,13.0 M149.2,13.0L149.2,32.2 M306.2,13.0L306.2,32.2 M353.3,5.7L337.6,13.0 M384.7,5.7L369.0,13.0 M-290.4,32.2L-274.7,39.5 M-164.8,32.2L-149.1,39.5 M-7.8,32.2L-23.5,39.5 M23.6,32.2L39.3,39.5 M70.7,39.5L70.7,58.7 M117.8,32.2L133.5,39.5 M164.9,39.5L164.9,58.7 M212.0,32.2L227.7,39.5 M227.7,39.5L227.7,58.7 M274.8,32.2L259.1,39.5 M306.2,32.2L321.9,39.5 M290.5,39.5L290.5,58.7 M-227.6,66.0L-227.6,85.2 M-149.1,58.7L-164.8,66.0 M-117.7,58.7L-102.0,66.0 M-102.0,66.0L-102.0,85.2 M23.6,66.0L23.6,85.2 M227.7,58.7L212.0,66.0 M259.1,58.7L243.4,66.0 M321.9,58.7L306.2,66.0 M384.7,58.7L400.4,66.0 M369.0,66.0L369.0,85.2 M416.1,58.7L431.8,66.0 M400.4,66.0L400.4,85.2 M-306.1,92.5L-306.1,111.7 M-149.1,92.5L-149.1,111.7 M-102.0,85.2L-86.3,92.5 M-86.3,92.5L-86.3,111.7 M-39.2,85.2L-23.5,92.5 M-7.8,85.2L-23.5,92.5 M-23.5,92.5L-23.5,111.7 M7.9,92.5L7.9,111.7 M55.0,85.2L70.7,92.5 M86.4,85.2L70.7,92.5 M149.2,85.2L164.9,92.5 M164.9,92.5L164.9,111.7 M196.3,92.5L196.3,111.7 M353.3,92.5L353.3,111.7 M400.4,85.2L416.1,92.5 M384.7,92.5L384.7,111.7 M431.8,85.2L416.1,92.5 M-243.3,111.7L-259.0,119.0 M-23.5,111.7L-39.2,119.0 M-39.2,119.0L-39.2,138.2 M7.9,111.7L-7.8,119.0 M70.7,111.7L55.0,119.0 M70.7,111.7L86.4,119.0 M149.2,119.0L149.2,138.2 M212.0,119.0L212.0,138.2 M321.9,111.7L306.2,119.0 M337.6,119.0L337.6,138.2 M369.0,119.0L369.0,138.2 M-259.0,138.2L-243.3,145.5 M-274.7,145.5L-274.7,164.7 M-227.6,138.2L-211.9,145.5 M-211.9,145.5L-211.9,164.7 M-164.8,138.2L-149.1,145.5 M-102.0,138.2L-117.7,145.5 M39.3,145.5L39.3,164.7 M164.9,145.5L164.9,164.7 M274.8,138.2L290.5,145.5 M259.1,145.5L259.1,164.7 M306.2,138.2L290.5,145.5 M337.6,138.2L353.3,145.5 M353.3,145.5L353.3,164.7 M400.4,138.2L416.1,145.5 M-321.8,172.0L-321.8,191.2 M-274.7,164.7L-259.0,172.0 M-259.0,172.0L-259.0,191.2 M-227.6,172.0L-227.6,191.2 M-149.1,164.7L-133.4,172.0 M-23.5,164.7L-39.2,172.0 M7.9,164.7L23.6,172.0 M70.7,164.7L55.0,172.0 M196.3,164.7L180.6,172.0 M180.6,172.0L180.6,191.2 M259.1,164.7L243.4,172.0 M384.7,164.7L369.0,172.0 M416.1,164.7L431.8,172.0 M-290.4,191.2L-306.1,198.5 M-259.0,191.2L-274.7,198.5 M-196.2,191.2L-180.5,198.5 M-164.8,191.2L-180.5,198.5 M-86.3,198.5L-86.3,217.7 M23.6,191.2L7.9,198.5 M7.9,198.5L7.9,217.7 M133.5,198.5L133.5,217.7 M180.6,191.2L196.3,198.5 M196.3,198.5L196.3,217.7 M227.7,198.5L227.7,217.7 M306.2,191.2L321.9,198.5 M321.9,198.5L321.9,217.7 M400.4,191.2L384.7,198.5 M384.7,198.5L384.7,217.7 M431.8,191.2L416.1,198.5"/></g>
</svg>

<!-- page header -->
<svg class="a" style="left:24px;top:72px" width="70" height="64" viewBox="24 72 70 64">
 <g fill="#5079ad" fill-rule="evenodd">
  <path transform="translate(48.3,104.3)" d="M14.98,-3.98 L20.70,-3.55 L20.70,3.55 L14.98,3.98 L13.41,7.77 L17.15,12.12 L12.12,17.15 L7.77,13.41 L3.98,14.98 L3.55,20.70 L-3.55,20.70 L-3.98,14.98 L-7.77,13.41 L-12.12,17.15 L-17.15,12.12 L-13.41,7.77 L-14.98,3.98 L-20.70,3.55 L-20.70,-3.55 L-14.98,-3.98 L-13.41,-7.77 L-17.15,-12.12 L-12.12,-17.15 L-7.77,-13.41 L-3.98,-14.98 L-3.55,-20.70 L3.55,-20.70 L3.98,-14.98 L7.77,-13.41 L12.12,-17.15 L17.15,-12.12 L13.41,-7.77Z M8.40,0.00 A8.4,8.4 0 1 0 -8.40,0.00 A8.4,8.4 0 1 0 8.40,0.00Z"/>
  <path transform="translate(77.8,87.4)" d="M8.76,-2.81 L12.32,-2.63 L12.32,2.63 L8.76,2.81 L6.81,6.18 L8.44,9.36 L3.89,11.99 L1.95,8.99 L-1.95,8.99 L-3.89,11.99 L-8.44,9.36 L-6.81,6.18 L-8.76,2.81 L-12.32,2.63 L-12.32,-2.63 L-8.76,-2.81 L-6.81,-6.18 L-8.44,-9.36 L-3.89,-11.99 L-1.95,-8.99 L1.95,-8.99 L3.89,-11.99 L8.44,-9.36 L6.81,-6.18Z M4.20,0.00 A4.2,4.2 0 1 0 -4.20,0.00 A4.2,4.2 0 1 0 4.20,0.00Z"/>
  <path transform="translate(77.8,121.1)" d="M8.76,-2.81 L12.32,-2.63 L12.32,2.63 L8.76,2.81 L6.81,6.18 L8.44,9.36 L3.89,11.99 L1.95,8.99 L-1.95,8.99 L-3.89,11.99 L-8.44,9.36 L-6.81,6.18 L-8.76,2.81 L-12.32,2.63 L-12.32,-2.63 L-8.76,-2.81 L-6.81,-6.18 L-8.44,-9.36 L-3.89,-11.99 L-1.95,-8.99 L1.95,-8.99 L3.89,-11.99 L8.44,-9.36 L6.81,-6.18Z M4.20,0.00 A4.2,4.2 0 1 0 -4.20,0.00 A4.2,4.2 0 1 0 4.20,0.00Z"/>
 </g>
</svg>
<div class="t" style="left:121px;top:81px;font-size:15.5px;line-height:18px;-webkit-text-stroke-width:0.45px">Пользователи и группы</div>
<div class="t" style="left:121px;top:109px;font-size:12.6px;letter-spacing:0.48px;line-height:18px;-webkit-text-stroke-width:0.55px;color:#202020">Настройка пользователей и групп системы (глобальная настройка, через конфигурационный файл)</div>

<!-- tabs -->
<div class="tab" style="left:55px;width:179px">Пользователи конфигурации</div>
<div class="tab" style="left:233px;width:139px">Группы конфигурации</div>
<div class="tab" style="left:516px;width:106px">Группы системы</div>

<!-- panel -->
<div class="a" style="left:35px;top:170px;width:760px;height:341px;border:1px solid #555"></div>
<div class="tab" style="left:371px;width:146px;background:#fff;border-bottom:none;height:27px">Пользователи системы</div>
<div class="a" style="left:372px;top:170px;width:144px;height:4px;background:#fff"></div>

<!-- left toolbar -->
<svg class="a" style="left:4px;top:168px" width="28" height="28" viewBox="0 0 28 28">
 <rect x="2.5" y="2.5" width="23" height="23" rx="1" fill="#dedede" stroke="#555" stroke-width="1.1"/>
 <rect x="7.6" y="6.8" width="11.6" height="14.4" rx="1" fill="#ececec" stroke="#333" stroke-width="1.3"/>
 <circle cx="20.4" cy="10.9" r="1.1" fill="#333"/><circle cx="20.4" cy="14.2" r="1.1" fill="#333"/><circle cx="20.4" cy="17.8" r="1.1" fill="#333"/>
 <circle cx="13.4" cy="11.7" r="2.4" fill="#333"/>
 <path d="M9.8,18.7 V16 Q9.8,14 12,14 H14.6 Q16.8,14 16.8,16 V18.7Z" fill="#333"/>
</svg>
<svg class="a" style="left:4px;top:197px" width="28" height="28" viewBox="0 0 28 28">
 <rect x="2.5" y="2.5" width="23" height="23" rx="1" fill="#dedede" stroke="#555" stroke-width="1.1"/>
 <circle cx="9.3" cy="8.6" r="1.9" fill="#333"/><circle cx="18.6" cy="8.6" r="1.9" fill="#333"/>
 <path d="M6.6,14 V12.2 Q6.6,10.9 7.9,10.9 H10.5 V14Z" fill="#333"/>
 <path d="M21.2,14 V12.2 Q21.2,10.9 19.9,10.9 H17.3 V14Z" fill="#333"/>
 <circle cx="14" cy="11.8" r="3" fill="#333" stroke="#dedede" stroke-width="0.8"/>
 <rect x="8.6" y="15" width="10.4" height="5.8" rx="2" fill="#333"/>
</svg>
<div class="hl" style="left:6px;top:228px;width:24px;background:#999"></div>
<svg class="a" style="left:4px;top:232px" width="28" height="28" viewBox="0 0 28 28">
 <rect x="2.5" y="2.5" width="23" height="23" rx="1" fill="#dedede" stroke="#555" stroke-width="1.1"/>
 <path d="M10.9,7.5 H9 Q7.6,7.5 7.6,8.9 V17.8 Q7.6,19.2 9,19.2 H16.8 Q18.2,19.2 18.2,17.8 V14.6" fill="none" stroke="#333" stroke-width="1.3"/>
 <path d="M10,17.4 Q9.2,11.4 17.4,11.2 V13.9 L21.3,9.8 L17.4,5.8 V8.2 Q8.6,8.2 10,17.4Z" fill="#333"/>
</svg>
<svg class="a" style="left:4px;top:261px" width="28" height="28" viewBox="0 0 28 28">
 <rect x="2.5" y="2.5" width="23" height="23" rx="1" fill="#dedede" stroke="#555" stroke-width="1.1"/>
 <path d="M11.6,10.2 V9.2 Q11.6,7.6 13.2,7.6 H14.8 Q16.4,7.6 16.4,9.2 V10.2" fill="none" stroke="#333" stroke-width="1.2"/>
 <path d="M7.8,10.4 H20" stroke="#333" stroke-width="1.3"/>
 <path d="M9.6,10.4 V18.8 Q9.6,20.2 11,20.2 H16.8 Q18.2,20.2 18.2,18.8 V10.4" fill="none" stroke="#333" stroke-width="1.3"/>
 <path d="M11.8,13 V17.6 M16.2,13 V17.6" stroke="#333" stroke-width="1"/>
 <path d="M13.4,13 V17.6 M14.4,13 V17.6" stroke="#888" stroke-width="0.7"/>
</svg>
<svg class="a" style="left:4px;top:290px" width="28" height="28" viewBox="0 0 28 28">
 <rect x="2.5" y="2.5" width="23" height="23" rx="1" fill="#dedede" stroke="#555" stroke-width="1.1"/>
 <path d="M7.6,12.4 Q9.2,8.4 13.8,8.4 Q17.2,8.4 19,10.8" fill="none" stroke="#333" stroke-width="2.2"/>
 <path d="M16,12.4 H20.7 V7.8Z" fill="#333"/>
 <path d="M20.2,15.4 Q18.6,19.4 14,19.4 Q10.6,19.4 8.8,17" fill="none" stroke="#333" stroke-width="2.2"/>
 <path d="M11.8,15.4 H7.2 V20Z" fill="#333"/>
</svg>
<div class="hl" style="left:6px;top:321px;width:24px;background:#999"></div>
<svg class="a" style="left:4px;top:325px" width="28" height="28" viewBox="0 0 28 28">
 <rect x="2.5" y="2.5" width="23" height="23" rx="1" fill="#dedede" stroke="#555" stroke-width="1.1"/>
 <rect x="6.5" y="15" width="14.7" height="4.8" rx="1" fill="#333"/>
 <path d="M11.6,15 L13.8,17 L16,15Z" fill="#dedede"/>
 <rect x="12.2" y="6.2" width="3.1" height="5.2" fill="#333"/>
 <path d="M9.2,11 H18.2 L13.7,15.4Z" fill="#333"/>
 <rect x="16.9" y="17" width="0.9" height="1.8" fill="#bbb"/><rect x="18.7" y="17" width="0.9" height="1.8" fill="#bbb"/>
</svg>

<!-- table -->
<div class="a" style="left:38px;top:174px;width:754px;height:334px;border:1px solid #555;background:#fff"></div>
<div class="a" style="left:39px;top:175px;width:752px;height:32px;background:#cccccc"></div>
<div class="a" style="left:40px;top:207px;width:736px;height:16px;background:#ededed"></div>
<div class="a" style="left:40px;top:239px;width:736px;height:16px;background:#ededed"></div>
<div class="a" style="left:40px;top:271px;width:736px;height:16px;background:#ededed"></div>
<div class="a" style="left:39px;top:335px;width:737px;height:48px;background:#95baf0"></div>
<div class="a" style="left:40px;top:399px;width:736px;height:16px;background:#ededed"></div>
<div class="a" style="left:40px;top:431px;width:736px;height:16px;background:#ededed"></div>
<div class="a" style="left:40px;top:463px;width:736px;height:16px;background:#ededed"></div>
<div class="vl" style="left:89px;top:175px;height:317px"></div>
<div class="vl" style="left:149px;top:175px;height:317px"></div>
<div class="vl" style="left:244px;top:175px;height:317px"></div>
<div class="vl" style="left:351px;top:175px;height:317px"></div>
<div class="vl" style="left:446px;top:175px;height:317px"></div>
<div class="vl" style="left:649px;top:175px;height:317px"></div>

<div class="t hd" style="left:39px;top:184px;width:50px;overflow:hidden;padding-left:6px">Отключ</div>
<div class="t hd" style="left:93px;top:184px">UID</div>
<div class="t hd" style="left:248px;top:177px">Имя</div>
<div class="t hd" style="left:355px;top:177px">Описание</div>
<div class="t hd" style="left:451px;top:177px">Дополнительные группы</div>
<div class="t hd" style="left:653px;top:177px">Домашний<br>каталог</div>
<div class="cb" style="top:210px"></div><div class="t" style="left:93px;top:207px">0</div><div class="t l" style="left:653px;top:207px"><i class="s">/</i>root</div>
<div class="cb" style="top:226px"></div><div class="t" style="left:93px;top:223px">1</div><div class="t l" style="left:653px;top:223px"></div>
<div class="cb" style="top:242px"></div><div class="t" style="left:93px;top:239px">2</div><div class="t l" style="left:653px;top:239px"></div>
<div class="cb" style="top:258px"></div><div class="t" style="left:93px;top:255px">8</div><div class="t l" style="left:653px;top:255px"><i class="s">/</i>var<i class="s">/</i>spool<i class="s">/</i>mail</div>
<div class="cb" style="top:274px"></div><div class="t" style="left:93px;top:271px">15</div><div class="t l" style="left:658px;top:271px"><i class="s">/</i>srv<i class="s">/</i>ftp</div>

<div class="cb" style="top:306px"></div><div class="t" style="left:93px;top:303px">1000</div><div class="t l" style="left:653px;top:303px"><i class="s">/</i>home<i class="s">/</i>superadmin</div>
<div class="cb" style="top:354px"></div><div class="t" style="left:93px;top:352px">1001</div>
<div class="t l" style="left:153px;top:352px;color:#134a94;text-decoration:underline;text-underline-offset:2px">miramax166</div>
<div class="t l" style="left:248px;top:352px">MiraMax166</div>
<div class="t l" style="left:355px;top:352px">miramax166</div>
<div class="t l" style="left:451px;top:336px">wheel, audio, cdrom, floppy,<br>lp, optical, storage,video, users,<br>sambashare, scanner</div>
<div class="t l" style="left:652px;top:352px"><i class="s">/</i>home<i class="s">/</i>miramax166</div>

<!-- scrollbars -->
<div class="hl" style="left:39px;top:492px;width:737px"></div>
<div class="vl" style="left:776px;top:206px;height:301px"></div>
<div class="hl" style="left:776px;top:206px;width:15px"></div>
<div class="a" style="left:777px;top:207px;width:14px;height:300px;background:#fff"></div>
<svg class="a" style="left:780px;top:210px" width="8" height="4"><path d="M0,4H8L4,0Z" fill="#333"/></svg>
<div class="a" style="left:780px;top:219px;width:8px;height:21px;border-radius:4px;background:#333"></div>
<svg class="a" style="left:780px;top:500px" width="8" height="4"><path d="M0,0H8L4,4Z" fill="#333"/></svg>
<svg class="a" style="left:42px;top:496px" width="4" height="8"><path d="M4,0V8L0,4Z" fill="#333"/></svg>
<div class="a" style="left:51px;top:496px;width:21px;height:8px;border-radius:4px;background:#333"></div>
<svg class="a" style="left:769px;top:496px" width="4" height="8"><path d="M0,0V8L4,4Z" fill="#333"/></svg>

<!-- status bar -->
<div class="hl" style="left:0;top:515px;width:800px"></div>
<svg class="a" style="left:780px;top:515px" width="19" height="22"><path d="M5.6,17.4L13.4,9.6M11.6,17.4L14.6,14.4" stroke="#555" stroke-width="1.4" stroke-linecap="round"/></svg>

<!-- dialog -->
<div class="a" style="left:124px;top:181px;width:550px;height:178px;border:1px solid #555;background:#fff"></div>
<div class="hl" style="left:124px;top:206px;width:550px"></div>
<div class="t" style="left:129px;top:187px;font-size:12.9px">Удалить пользователя</div>
<svg class="a" style="left:657px;top:189px" width="10" height="10"><path d="M1,1L9,9M9,1L1,9" stroke="#333" stroke-width="1.5"/></svg>
<svg class="a" style="left:132px;top:216px" width="48" height="48" viewBox="0 0 48 48">
 <circle cx="24" cy="23.4" r="20.3" fill="#333"/>
 <rect x="20.4" y="7.1" width="7.2" height="6.7" rx="0.8" fill="#fff"/>
 <path d="M16.9,16.9 H28.4 V31.1 H31.1 V36.9 H16.9 V31.1 H20.4 V23.1 H16.9Z" fill="#fff"/>
</svg>
<div class="t" style="left:192px;top:215px;font-size:12.7px">Пользователь в конфигурации отсутствует.</div>
<div class="t" style="left:192px;top:231px;font-size:12.7px">Вы действительно хотите удалить пользователя <b>miramax166</b> из пользователей</div>
<div class="t" style="left:192px;top:247px;font-size:12.7px">системы?</div>
<div class="a" style="left:492px;top:327px;width:83px;height:24px;border:1px solid #555;border-radius:2px;background:#dedede;text-align:center;line-height:21px">Отмена</div>
<div class="a" style="left:584px;top:327px;width:83px;height:24px;border:1px solid #555;border-radius:2px;background:#dedede;text-align:center;line-height:21px">Удалить</div>
</div></body></html>
